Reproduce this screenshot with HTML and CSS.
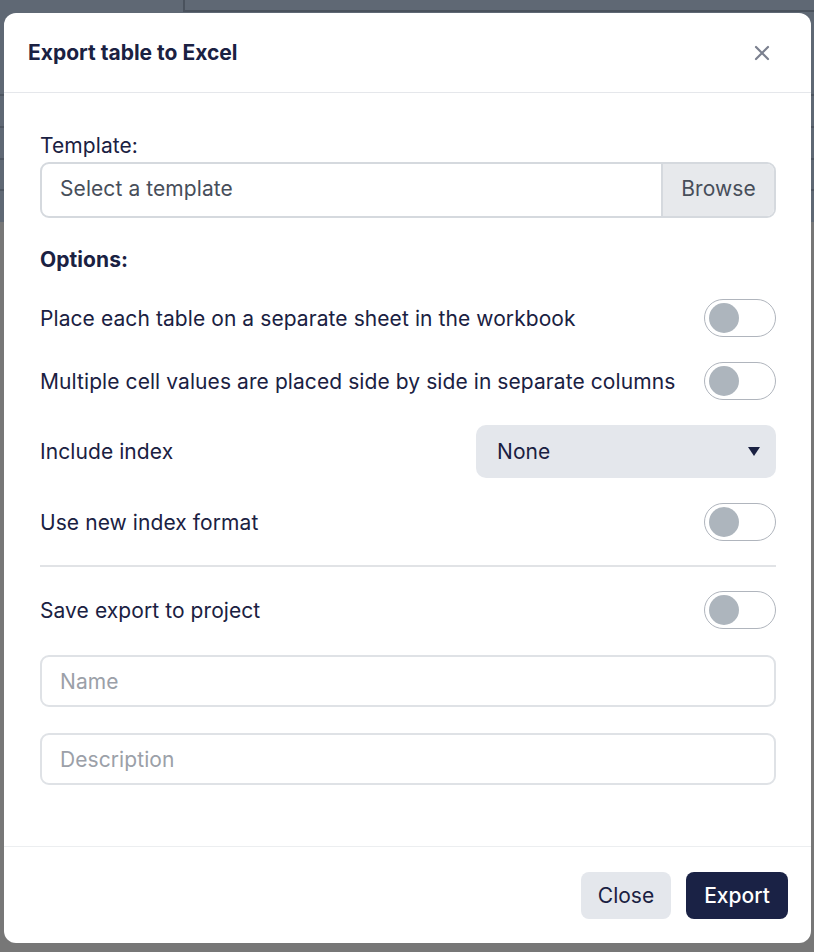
FILE: index.html
```html
<!DOCTYPE html>
<html>
<head>
<meta charset="utf-8">
<link rel="stylesheet" href="styles.css">
</head>
<body>
<div class="page">
  <div class="page-top">
    <div class="pt-row pt-row1"><div class="pt-cell-a"></div><div class="pt-cell-b"></div></div>
    <div class="pt-line l1"></div>
    <div class="pt-line l2"></div>
    <div class="pt-line l3"></div>
    <div class="pt-line l4"></div>
  </div>
  <div class="page-bottom"></div>
</div>

<div class="modal">
  <div class="modal-header">
    <h1 class="modal-title">Export table to Excel</h1>
    <button class="close-x" aria-label="Close">
      <svg width="16" height="16" viewBox="0 0 16 16"><path d="M2 2 L14 14 M14 2 L2 14" stroke="#7b808f" stroke-width="2.2" stroke-linecap="round"/></svg>
    </button>
  </div>
  <div class="modal-body">
    <div class="field">
      <label class="label">Template:</label>
      <div class="file-input">
        <span class="file-text">Select a template</span>
        <span class="file-browse">Browse</span>
      </div>
    </div>
    <div class="options-title">Options:</div>
    <div class="row">
      <span class="row-text">Place each table on a separate sheet in the workbook</span>
      <span class="toggle"><span class="knob"></span></span>
    </div>
    <div class="row">
      <span class="row-text">Multiple cell values are placed side by side in separate columns</span>
      <span class="toggle"><span class="knob"></span></span>
    </div>
    <div class="row">
      <span class="row-text">Include index</span>
      <div class="select"><span>None</span><span class="caret"></span></div>
    </div>
    <div class="row">
      <span class="row-text">Use new index format</span>
      <span class="toggle"><span class="knob"></span></span>
    </div>
    <div class="sep"></div>
    <div class="row">
      <span class="row-text">Save export to project</span>
      <span class="toggle"><span class="knob"></span></span>
    </div>
    <div class="text-input">Name</div>
    <div class="text-input">Description</div>
  </div>
  <div class="modal-footer">
    <button class="btn btn-light">Close</button>
    <button class="btn btn-dark">Export</button>
  </div>
</div>
</body>
</html>
```
FILE: styles.css
```css
* { box-sizing: border-box; }
html, body { margin: 0; padding: 0; }
body {
  width: 814px;
  height: 952px;
  overflow: hidden;
  font-family: Inter, "Noto Sans", sans-serif;
  position: relative;
  background: #777777;
}
.page { width: 814px; height: 952px; display: flex; flex-direction: column; }
.page-top { height: 222px; background: #5f6874; position: relative; }
.page-bottom { flex: 1; background: #777777; }
.pt-row1 { display: flex; height: 12px; }
.pt-cell-a { width: 185px; border-right: 2px solid #4a525d; }
.pt-cell-b { flex: 1; border-bottom: 2px solid #4a525d; }
.pt-line { position: absolute; left: 0; width: 814px; height: 2px; background: #4e5661; }
.l1 { top: 94px; }
.l2 { top: 126px; }
.l3 { top: 158px; }
.l4 { top: 189px; }

.modal {
  position: absolute;
  left: 4px;
  top: 13px;
  width: 807px;
  height: 930px;
  background: #fff;
  border-radius: 12px;
  display: flex;
  flex-direction: column;
  color: #1a2142;
}
.modal-header {
  height: 80px;
  border-bottom: 1px solid #e5e7eb;
  display: flex;
  align-items: center;
  justify-content: space-between;
  padding: 0 37px 0 24px;
}
.modal-title {
  margin: 0;
  font-size: 21px;
  font-weight: 700;
  color: #1a2142;
}
.close-x {
  border: 0;
  background: none;
  padding: 4px;
  width: 24px;
  height: 24px;
  display: flex;
  align-items: center;
  justify-content: center;
}
.modal-body {
  flex: 1;
  padding: 39px 35px 0 36px;
  display: flex;
  flex-direction: column;
  gap: 25px;
  font-size: 21px;
  letter-spacing: 0.08px;
}
.field { display: flex; flex-direction: column; gap: 2px; margin-bottom: 3px; }
.label { line-height: 28px; }
.file-input {
  height: 56px;
  border: 2px solid #d5d9de;
  border-radius: 9px;
  display: flex;
  overflow: hidden;
}
.file-text { flex: 1; display: flex; align-items: center; padding: 0 0 3px 18px; color: #474e5a; }
.file-browse {
  width: 113px;
  background: #e7e9ec;
  border-left: 2px solid #d5d9de;
  display: flex; align-items: center; justify-content: center;
  padding-bottom: 3px;
  color: #474e5a;
}
.options-title { font-weight: 700; line-height: 28px; }
.row { display: flex; align-items: center; justify-content: space-between; min-height: 38px; }
.toggle {
  width: 72px; height: 38px;
  border: 1px solid #b0b5bd;
  border-radius: 19px;
  display: flex; align-items: center;
  padding-left: 4px;
}
.knob { width: 30px; height: 30px; border-radius: 50%; background: #adb5bd; }
.select {
  width: 300px; height: 53px;
  background: #e4e7ec;
  border-radius: 10px;
  display: flex; align-items: center; justify-content: space-between;
  padding: 0 16px 0 21px;
}
.caret {
  width: 0; height: 0;
  border-left: 6px solid transparent;
  border-right: 6px solid transparent;
  border-top: 9px solid #1a2142;
}
.sep { height: 2px; background: #e1e3e6; margin: -1px 0; }
.text-input {
  height: 52px;
  border: 2px solid #dfe2e6;
  border-radius: 9px;
  display: flex; align-items: center;
  padding-left: 18px;
  color: #9ba0a8;
  margin-top: 1px;
}
.modal-footer {
  height: 97px;
  border-top: 1px solid #eceef0;
  display: flex;
  align-items: center;
  justify-content: flex-end;
  gap: 15px;
  padding: 0 23px 0 0;
}
.btn {
  height: 47px;
  border: 0;
  border-radius: 8px;
  font-family: Inter, "Noto Sans", sans-serif;
  font-size: 21px;
  padding: 0;
}
.btn-light { background: #e4e7ec; color: #1a2142; width: 90px; }
.btn-dark { background: #1a2245; color: #fff; width: 102px; font-weight: 500; }
```
